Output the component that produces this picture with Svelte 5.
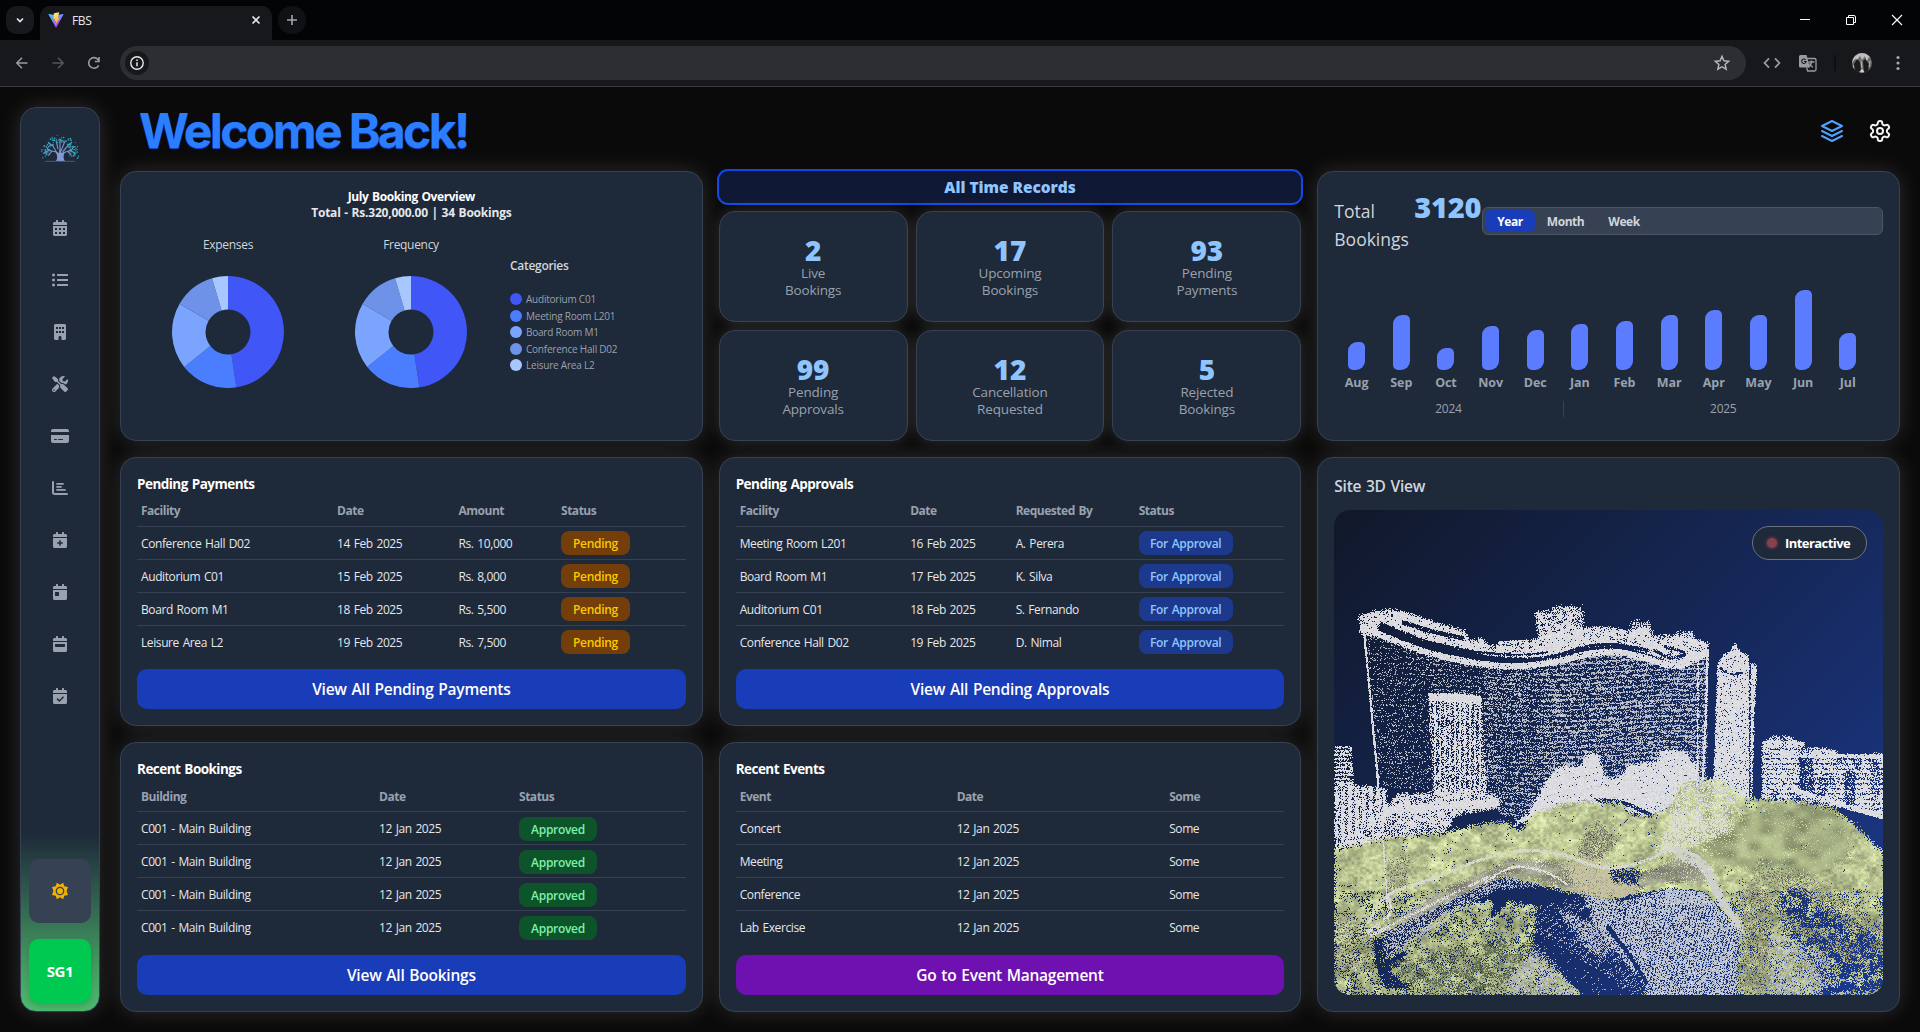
<script>
  import { onMount } from 'svelte';

  const calendarTop = 'M400 64h-48V16c0-8.8-7.2-16-16-16h-32c-8.8 0-16 7.2-16 16v48H160V16c0-8.8-7.2-16-16-16h-32c-8.8 0-16 7.2-16 16v48H48C21.5 64 0 85.5 0 112v48h448v-48c0-26.5-21.5-48-48-48z';
  const calendarBody = 'M0 464c0 26.5 21.5 48 48 48h352c26.5 0 48-21.5 48-48V192H0z';
  const calendar = (holes) => ({ w: 448, d: calendarTop + calendarBody + holes });

  const nav = [
    calendar('M64 256h64v64H64zM192 256h64v64h-64zM320 256h64v64h-64zM64 384h64v64H64zM192 384h64v64h-64zM320 384h64v64h-64z'),
    { w: 512, d: 'M48 48a48 48 0 1 0 .1 0zM48 208a48 48 0 1 0 .1 0zM48 368a48 48 0 1 0 .1 0zM176 64h320a16 16 0 0 1 16 16v32a16 16 0 0 1-16 16H176a16 16 0 0 1-16-16V80a16 16 0 0 1 16-16zM176 224h320a16 16 0 0 1 16 16v32a16 16 0 0 1-16 16H176a16 16 0 0 1-16-16v-32a16 16 0 0 1 16-16zM176 384h320a16 16 0 0 1 16 16v32a16 16 0 0 1-16 16H176a16 16 0 0 1-16-16v-32a16 16 0 0 1 16-16z' },
    { w: 384, d: 'M48 0C21.5 0 0 21.5 0 48v416c0 26.5 21.5 48 48 48h96v-80c0-26.5 21.500-48 48-48s48 21.500 48 48v80h96c26.500 0 48-21.500 48-48V48c0-26.500-21.500-48-48-48zM64 96h64v64H64zM160 96h64v64h-64zM256 96h64v64h-64zM64 224h64v64H64zM160 224h64v64h-64zM256 224h64v64h-64z' },
    { w: 512, d: 'M501.1 395.700L384 278.600c-23.100-23.100-57.600-27.600-85.400-13.900L192 158.100V96L64 0 0 64l96 128h62.100l106.600 106.600c-13.600 27.800-9.200 62.300 13.900 85.400l117.100 117.100c14.600 14.600 38.200 14.600 52.700 0l52.700-52.700c14.500-14.600 14.500-38.200 0-52.700zM331.700 225c28.300 0 54.900 11 74.900 31l19.400 19.400c15.800-6.900 30.800-16.500 43.800-29.500 37.100-37.100 49.700-89.300 37.900-136.700-2.200-9-13.500-12.100-20.100-5.500l-74.400 74.400-67.900-11.300L334 98.900l74.400-74.400c6.600-6.600 3.400-17.900-5.700-20.200-47.400-11.700-99.600.9-136.600 37.900-28.500 28.500-41.900 66.100-41.200 103.600l82.100 82.100c8.100-1.900 16.500-2.900 24.700-2.900zm-103.900 82l-56.700-56.700L18.700 402.800c-25 25-25 65.500 0 90.500s65.500 25 90.500 0l123.600-123.600c-7.600-19.900-9.900-41.600-5-62.700zM64 472c-13.200 0-24-10.800-24-24 0-13.300 10.700-24 24-24s24 10.700 24 24c0 13.200-10.700 24-24 24z' },
    { w: 576, d: 'M64 32C28.700 32 0 60.700 0 96v32h576V96c0-35.300-28.700-64-64-64zM576 224H0v192c0 35.300 28.700 64 64 64h448c35.300 0 64-28.700 64-64zM112 352h64a16 16 0 0 1 0 32h-64a16 16 0 0 1 0-32zM240 352h128a16 16 0 0 1 0 32H240a16 16 0 0 1 0-32z' },
    { w: 512, d: 'M32 32c17.700 0 32 14.300 32 32v336c0 8.800 7.200 16 16 16h400a32 32 0 0 1 0 64H80c-44.200 0-80-35.800-80-80V64c0-17.700 14.300-32 32-32zM160 96h192a28 28 0 0 1 0 56H160a28 28 0 0 1 0-56zM160 192h128a28 28 0 0 1 0 56H160a28 28 0 0 1 0-56zM160 288h256a28 28 0 0 1 0 56H160a28 28 0 0 1 0-56z' },
    calendar('M200 264h48v64h64v48h-64v64h-48v-64h-64v-48h64z'),
    calendar('M80 256h96c8.800 0 16 7.200 16 16v96c0 8.800-7.200 16-16 16H80c-8.800 0-16-7.200-16-16v-96c0-8.800 7.200-16 16-16z'),
    calendar('M80 256h288c8.800 0 16 7.200 16 16v64c0 8.800-7.200 16-16 16H80c-8.800 0-16-7.200-16-16v-64c0-8.800 7.200-16 16-16z'),
    calendar('M320 264l34 34-150 150-92-92 34-34 58 58z')
  ];

  // Donut segments as cumulative shares of the circle.
  const shares = [
    [0, 0.476, '#4056f7'],
    [0.476, 0.643, '#4b7dff'],
    [0.643, 0.834, '#7ba4ff'],
    [0.834, 0.954, '#6d92e8'],
    [0.954, 1, '#a8c7ff']
  ];
  const polar = (t, r) => `${(Math.sin(t * 2 * Math.PI) * r).toFixed(2)} ${(-Math.cos(t * 2 * Math.PI) * r).toFixed(2)}`;
  const slice = (a, b) =>
    `M${polar(a, 56)}A56 56 0 ${b - a > 0.5 ? 1 : 0} 1 ${polar(b, 56)}L${polar(b, 22.5)}A22.5 22.5 0 ${b - a > 0.5 ? 1 : 0} 0 ${polar(a, 22.5)}Z`;
  const categories = ['Auditorium C01', 'Meeting Room L201', 'Board Room M1', 'Conference Hall D02', 'Leisure Area L2'];

  const records = [
    ['2', 'Live', 'Bookings'], ['17', 'Upcoming', 'Bookings'], ['93', 'Pending', 'Payments'],
    ['99', 'Pending', 'Approvals'], ['12', 'Cancellation', 'Requested'], ['5', 'Rejected', 'Bookings']
  ];

  const months = [
    ['Aug', 28], ['Sep', 55], ['Oct', 22], ['Nov', 44], ['Dec', 40.5], ['Jan', 46],
    ['Feb', 49.5], ['Mar', 55], ['Apr', 60.5], ['May', 55], ['Jun', 80], ['Jul', 37]
  ];

  const tables = [
    {
      title: 'Pending Payments', key: 'payments', button: 'View All Pending Payments', pill: 'pending',
      head: ['Facility', 'Date', 'Amount', 'Status'],
      rows: [
        ['Conference Hall D02', '14 Feb 2025', 'Rs. 10,000', 'Pending'],
        ['Auditorium C01', '15 Feb 2025', 'Rs. 8,000', 'Pending'],
        ['Board Room M1', '18 Feb 2025', 'Rs. 5,500', 'Pending'],
        ['Leisure Area L2', '19 Feb 2025', 'Rs. 7,500', 'Pending']
      ]
    },
    {
      title: 'Pending Approvals', key: 'approvals', button: 'View All Pending Approvals', pill: 'approval',
      head: ['Facility', 'Date', 'Requested By', 'Status'],
      rows: [
        ['Meeting Room L201', '16 Feb 2025', 'A. Perera', 'For Approval'],
        ['Board Room M1', '17 Feb 2025', 'K. Silva', 'For Approval'],
        ['Auditorium C01', '18 Feb 2025', 'S. Fernando', 'For Approval'],
        ['Conference Hall D02', '19 Feb 2025', 'D. Nimal', 'For Approval']
      ]
    },
    {
      title: 'Recent Bookings', key: 'bookings', button: 'View All Bookings', pill: 'approved',
      head: ['Building', 'Date', 'Status'],
      rows: Array.from({ length: 4 }, () => ['C001 - Main Building', '12 Jan 2025', 'Approved'])
    },
    {
      title: 'Recent Events', key: 'events', button: 'Go to Event Management', pill: '',
      head: ['Event', 'Date', 'Some'],
      rows: ['Concert', 'Meeting', 'Conference', 'Lab Exercise'].map((e) => [e, '12 Jan 2025', 'Some'])
    }
  ];

  // Leaves of the tree logo, scattered over its crown.
  const frac = (v) => v - Math.floor(v);
  const leaves = Array.from({ length: 95 }, (_, i) => {
    const a = Math.PI * (-0.1 + 1.2 * frac(i * 0.618034));
    const r = 0.55 + 0.45 * frac(Math.sin(i * 12.9898) * 43758.5453);
    return [20 + Math.cos(a) * 19 * r, 19 - Math.sin(a) * 18 * r, 0.55 + (i % 3) * 0.15];
  });

  let canvas;

  // Point cloud of the site: scattered samples over outlines of buildings and trees.
  function drawSite(cv) {
    const W = 549, H = 485;
    const ctx = cv.getContext('2d');
    const img = ctx.createImageData(W, H);
    const px = img.data;
    let seed = 7;
    const rnd = () => {
      seed = (seed + 0x6d2b79f5) | 0;
      let t = Math.imul(seed ^ (seed >>> 15), 1 | seed);
      t = (t + Math.imul(t ^ (t >>> 7), 61 | t)) ^ t;
      return ((t ^ (t >>> 14)) >>> 0) / 4294967296;
    };
    const hash = (x, y) => {
      let h = Math.imul(x, 374761393) + Math.imul(y, 668265263);
      h = Math.imul(h ^ (h >>> 13), 1274126177);
      return ((h ^ (h >>> 16)) >>> 0) / 4294967296;
    };
    const noise = (x, y) => {
      const ix = Math.floor(x), iy = Math.floor(y);
      let fx = x - ix, fy = y - iy;
      fx = fx * fx * (3 - 2 * fx);
      fy = fy * fy * (3 - 2 * fy);
      const a = hash(ix, iy), b = hash(ix + 1, iy), c = hash(ix, iy + 1), d = hash(ix + 1, iy + 1);
      return a + (b - a) * fx + (c - a) * fy + (a - b - c + d) * fx * fy;
    };
    const map = (pts) => {
      const out = [];
      for (let i = 0; i < pts.length; i += 2) out.push([(pts[i] - 62) / 2.57, (pts[i + 1] - 162) / 2.694]);
      return out;
    };
    const inside = (p, x, y) => {
      let c = false;
      for (let i = 0, j = p.length - 1; i < p.length; j = i++) {
        if (p[i][1] > y !== p[j][1] > y && x < ((p[j][0] - p[i][0]) * (y - p[i][1])) / (p[j][1] - p[i][1]) + p[i][0]) c = !c;
      }
      return c;
    };
    const put = (x, y, c) => {
      x |= 0; y |= 0;
      if (x < 0 || y < 0 || x >= W || y >= H) return;
      const o = (y * W + x) * 4;
      if (!c) { px[o + 3] = 0; return; }
      px[o] = c[0]; px[o + 1] = c[1]; px[o + 2] = c[2]; px[o + 3] = c[3] ?? 255;
    };
    const area = (pts, density, color, jitter = 2) => {
      const p = map(pts);
      const xs = p.map((v) => v[0]), ys = p.map((v) => v[1]);
      for (let y = Math.floor(Math.min(...ys)) - 2; y < Math.max(...ys) + 2; y++)
        for (let x = Math.floor(Math.min(...xs)) - 2; x < Math.max(...xs) + 2; x++) {
          if (!inside(p, x + (rnd() - 0.5) * jitter, y + (rnd() - 0.5) * jitter)) continue;
          const d = typeof density === 'function' ? density(x, y) : density;
          if (rnd() < d) put(x, y, typeof color === 'function' ? color(x, y) : color);
        }
    };
    // Catmull-Rom strand of samples with a soft edge.
    const strand = (pts, width, density, color) => {
      const p = map(pts);
      for (let i = 0; i < p.length - 1; i++) {
        const a = p[Math.max(0, i - 1)], b = p[i], c = p[i + 1], d = p[Math.min(p.length - 1, i + 2)];
        const len = Math.hypot(c[0] - b[0], c[1] - b[1]);
        const n = Math.round(len * width * density * 2.2);
        for (let k = 0; k < n; k++) {
          const t = rnd(), t2 = t * t, t3 = t2 * t;
          const q = [0, 1].map((m) => 0.5 * (2 * b[m] + (c[m] - a[m]) * t + (2 * a[m] - 5 * b[m] + 4 * c[m] - d[m]) * t2 + (3 * b[m] - a[m] - 3 * c[m] + d[m]) * t3));
          put(q[0] + (rnd() - 0.5) * width * 0.5, q[1] + (rnd() - 0.5) * width, typeof color === 'function' ? color(q[0], q[1]) : color);
        }
      }
    };
    const white = () => { const v = 212 + rnd() * 22; return [v, v, v + 3, 250]; };
    const grey = () => { const v = 165 + rnd() * 60; return [v, v + 3, v + 10, 235]; };
    const leaf = (x, y) => {
      const n = noise(x / 11, y / 8) * 0.5 + noise(x / 3, y / 2.5) * 0.5;
      const v = 0.72 + n * 0.56 + (rnd() - 0.5) * 0.12 - (y > 400 ? 0.08 : 0);
      return [186 * v, 196 * v, 146 * v];
    };
    const mossy = (x, y) => { const v = 0.78 + noise(x / 12, y / 8) * 0.35 + (rnd() - 0.5) * 0.05; return [166 * v, 177 * v, 132 * v]; };
    const soil = () => { const v = 95 + rnd() * 70; return [v, v, v * 0.88]; };

    // Main block facade with its floor rows.
    area([140,500,178,500,260,535,400,570,520,582,620,575,720,548,800,545,880,562,945,580,1022,545,1018,890,940,960,620,970,530,1000,450,960,450,930,175,905],
      (x, y) => {
        const row = (y + Math.sin(x / 45) * 3 + noise(x / 5, y / 3) * 2) % 5.2 < 2 ? 1.5 : 0.55;
        const base = x < 95 ? 0.16 : x < 150 ? 0.22 : x < 210 ? 0.36 : 0.46;
        return base * row * (0.45 + noise(x / 4, y / 1.6) * 1.15);
      }, grey);
    strand([140,498,158,700,176,905], 3, 1, white);
    strand([1022,545,1018,700,1010,890], 4, 0.7, white);
    strand([998,570,996,860], 3, 0.35, white);
    // Roof plant room, roof deck and parapet.
    area([578,438,640,420,695,418,702,440,700,492,650,500,588,510], (x, y) => 0.45 + noise(x / 5, y / 3) * 0.6, white, 4);
    area([125,445,165,432,210,428,260,440,330,465,400,488,408,512,440,506,460,525,540,522,600,500,640,488,700,478,740,475,830,485,870,472,880,500,960,498,1025,518,1022,556,945,580,800,520,700,530,610,562,480,555,300,515,180,465,170,500,128,495], (x, y) => 0.72 + noise(x / 4, y / 3) * 0.4, white, 4);
    area([825,460,870,462,880,505,820,500], 0.55, white, 5);
    area([935,490,985,488,990,510,935,510], 0.55, white, 5);
    strand([165,492,300,545,420,573,520,583,620,573,720,549,790,545,860,560,945,582,1022,545], 6, 1.3, white);
    strand([178,478,300,525,420,555,540,565,620,556,710,530,780,524,870,540], 2.5, 1.2, null);
    strand([185,470,300,515,420,543,540,552,610,545], 1.6, 1.2, null);
    strand([240,465,310,488,395,508], 4, 1.4, null);
    strand([485,520,560,516], 3, 0.9, white);
    strand([885,540,925,560,965,548,910,530], 3, 1, null);
    // Block in front of the facade.
    area([303,655,440,660,452,932,318,932], 1, null, 0);
    area([303,655,440,660,452,932,318,932], (x) => ((x + 0.5) % 5 < 2.2 ? 0.88 : 0.52), white);
    area([303,655,400,655,440,664,440,684,306,675], 0.97, white);
    // Slim tower with its dome.
    area([1045,600,1048,572,1060,552,1080,540,1092,518,1104,540,1125,552,1132,574,1148,575,1142,680,1135,940,1036,940], (x) => (x > 414 && x < 417 ? 0.35 : 0.92), white);
    strand([1055,588,1080,604,1110,600], 2, 0.9, null);
    // Distant blocks.
    area([1162,795,1185,772,1235,770,1262,798,1350,806,1360,822,1475,815,1475,990,1350,960,1160,940],
      (x, y) => (y % 5 < 2.2 ? 0.88 : 0.55) * (noise(x / 9, y / 30) > 0.38 ? 1.05 : 0.6), white, 3);
    area([1258,830,1290,830,1298,925,1255,915], 0.7, null);
    area([1370,868,1400,860,1400,945,1375,940], 0.6, null);
    strand([1165,790,1270,792], 4, 0.9, white);
    strand([1210,822,1475,826], 4, 0.9, white);
    strand([1240,915,1330,945,1475,988], 5, 1, white);
    area([62,798,105,798,112,905,62,905], (x, y) => (y % 4 < 1.5 ? 0.8 : 0.35), white);
    area([62,905,80,892,110,900,165,905,195,915,195,975,62,1075], (x) => (x % 7 < 4 ? 0.92 : 0.6), white, 4);
    area([195,960,230,925,290,925,400,912,490,935,490,960,370,985,355,1025,62,1075], (x, y) => 0.55 + noise(x / 6, y / 4) * 0.5, white, 4);
    strand([195,972,330,960,480,950], 7, 1.2, white);
    area([615,875,640,850,695,850,710,815,740,815,752,860,760,885,800,882,815,850,895,835,900,805,965,815,1000,860,1000,890,1000,950,880,990,820,975,790,950,730,960,600,990,520,1010,560,975], 0.96, white, 4);
    strand([735,945,800,950,880,985], 4, 0.8, null);

    // Tree cover.
    area([62,1075,200,1045,340,1030,460,1002,510,1000,535,1028,570,985,640,955,720,945,800,950,830,985,880,985,925,955,955,900,1020,885,1075,900,1110,935,1240,945,1340,965,1400,1010,1475,1085,1475,1470,62,1470],
      (x, y) => Math.min(1, 0.84 + noise(x / 7, y / 5) * 0.5 - (y > 380 ? 0.26 : 0)), leaf, 6);
    area([925,960,955,900,1020,885,1080,905,1100,960,1060,1010,940,1010], 0.4, white, 8);
    area([1005,1010,1090,1020,1100,990,1240,945,1340,965,1390,1010,1380,1100,1240,1160,1120,1130,1010,1110], 0.9, mossy, 8);
    area([700,1040,735,1000,790,1050,740,1110,690,1090], 0.6, soil, 6);
    area([200,1110,260,1090,250,1160,200,1200], 0.4, soil, 10);
    area([885,1090,935,960,960,1000,1090,990,1080,1030,1000,1060,940,1085], 0.7, () => [218, 221, 204], 6);
    // Road sweeping through the park.
    area([190,1285,330,1190,520,1100,650,1110,760,1145,880,1130,960,1085,1030,1150,1000,1165,880,1165,800,1215,700,1200,560,1150,440,1180,300,1255,150,1310],
      0.82, (x, y) => { const v = 105 + noise(x / 18, y / 6) * 65 + rnd() * 25; return [v, v, v * 0.9]; }, 5);
    area([640,1110,760,1100,860,1200,760,1220,690,1200], 0.8, () => [190 + rnd() * 15, 194, 160], 12);
    area([765,1125,850,1130,840,1170,780,1160], 0.7, null, 6);
    // Open ground and plaza.
    area([190,1300,440,1175,500,1150,620,1180,700,1200,760,1215,920,1180,1010,1190,1100,1290,1095,1470,700,1470,570,1340,580,1225,510,1215,480,1250,460,1210,350,1240,190,1372], 1, null, 4);
    area([190,1290,440,1175,500,1148,600,1175,490,1180,420,1215,190,1372], 0.5, grey, 5);
    area([705,1200,800,1215,920,1180,1010,1190,1100,1290,1095,1470,870,1470,850,1430,715,1255],
      (x, y) => ((x + y * 0.25) % 3.5 < 2 ? 0.84 : 0.56) + (y < 395 && x > 330 ? 0.15 : 0), () => { const v = 178 + rnd() * 50; return [v, v + 4, v + 12, 235]; });
    area([580,1230,700,1200,780,1330,870,1470,710,1470,570,1330], (x, y) => ((x * 0.8 + y) % 7 < 3 ? 0.3 : 0.06), grey);
    area([640,1240,700,1260,790,1330,750,1370,700,1330], 0.6, grey, 5);
    strand([765,1285,820,1360,865,1435], 5, 1.3, null);
    area([570,1310,600,1310,835,1468,700,1468], 0.8, null, 3);
    strand([700,1262,720,1240], 6, 1.2, null);
    strand([470,1250,490,1190], 6, 1.2, null);
    // Kerbs and guard rails.
    strand([150,1275,200,1200,330,1150,450,1100,560,1080,650,1092,760,1126,860,1108,940,1072,1000,1100], 3, 0.8, () => [214, 216, 208]);
    strand([940,1085,1010,1120,1050,1200,1105,1285], 12, 0.7, () => [205, 208, 205]);
    strand([450,1165,520,1125,600,1135,660,1170], 2, 1, white);
    strand([150,1300,205,1250,200,1200], 4, 0.6, white);
    strand([185,975,190,1080,198,1200,205,1290], 2, 0.5, white);
    strand([155,1310,330,1215,460,1150], 3, 0.4, white);
    // Shaded gaps.
    area([160,1310,188,1320,190,1375,240,1345,245,1375,200,1400,260,1450,190,1452,165,1380], 0.95, null, 4);
    area([62,1240,160,1300,160,1380,62,1420], 0.3, soil, 8);
    area([210,1380,560,1300,580,1340,480,1468,250,1468], (x, y) => (noise(x / 8, y / 5) > 0.55 ? 0.6 : 0.1), () => [96, 108, 84], 6);
    area([580,1335,700,1470,560,1470,500,1440], 0.45, grey, 6);
    area([1205,1175,1260,1180,1330,1230,1475,1320,1475,1470,1300,1470,1300,1400,1220,1290],
      (x, y) => (noise(x / 7, y / 5) > 0.5 ? 0.85 : 0.2), null, 8);
    area([1110,1180,1170,1180,1180,1470,1100,1470], 0.35, () => soil(), 10);
    area([1180,1300,1300,1340,1380,1470,1180,1470], 0.4, grey, 8);
    area([1150,1110,1260,1140,1400,1230,1475,1290,1475,1340,1360,1270,1230,1190,1140,1160], 0.35, soil, 14);
    area([1120,1160,1250,1260,1400,1330,1475,1400,1400,1370,1240,1300,1120,1200], 0.35, soil, 14);
    strand([1320,1460,1400,1445], 6, 1.3, null);
    ctx.putImageData(img, 0, 0);
  }

  onMount(() => drawSite(canvas));
</script>

{#snippet dataTable(t)}
  <section class="card table-card {t.key}">
    <h3>{t.title}</h3>
    <div class="row head">
      {#each t.head as h}<span>{h}</span>{/each}
    </div>
    {#each t.rows as r}
      <div class="row">
        {#each r as c, i}
          {#if t.pill && i === r.length - 1}
            <b class="pill {t.pill}">{c}</b>
          {:else}
            <span>{c}</span>
          {/if}
        {/each}
      </div>
    {/each}
    <button class="wide">{t.button}</button>
  </section>
{/snippet}

{#snippet donut(label)}
  <div class="donut">
    <span>{label}</span>
    <svg width="112" height="112" viewBox="-56 -56 112 112">
      {#each shares as [a, b, c]}<path d={slice(a, b)} fill={c} />{/each}
    </svg>
  </div>
{/snippet}

<div class="window">
  <header class="tabs">
    <div class="tab-search">
      <svg width="10" height="10" viewBox="0 0 10 10"><path d="M2 3.500l3 3 3-3" fill="none" stroke="#e6e6e8" stroke-width="1.700" /></svg>
    </div>
    <div class="tab">
      <svg width="16" height="16" viewBox="0 0 32 32">
        <defs>
          <linearGradient id="va" x1="0" y1="0" x2=".6" y2="1"><stop offset="0" stop-color="#41d1ff" /><stop offset="1" stop-color="#bd34fe" /></linearGradient>
          <linearGradient id="vb" x1=".4" y1="0" x2=".6" y2="1"><stop offset="0" stop-color="#ffea83" /><stop offset="1" stop-color="#ffa800" /></linearGradient>
        </defs>
        <path d="M31 5L16.800 30.500c-.3.600-1.100.600-1.400 0L1 5c-.4-.6.2-1.400 1-1.200l14 2.500 14-2.500c.8-.2 1.400.6 1 1.200z" fill="url(#va)" />
        <path d="M22.500.5l-10.700 2-.7 11.700 3.300-.7-1 5.200 3-.8-2 8.600L23.500 11l-4 .8L22.500.5z" fill="url(#vb)" />
      </svg>
      <span>FBS</span>
      <svg width="10" height="10" viewBox="0 0 10 10"><path d="M1.500 1.500l7 7M8.500 1.500l-7 7" stroke="#e6e6e8" stroke-width="1.700" /></svg>
    </div>
    <div class="new-tab">
      <svg width="12" height="12" viewBox="0 0 12 12"><path d="M6 1v10M1 6h10" stroke="#a4a4a8" stroke-width="1.600" /></svg>
    </div>
    <div class="controls">
      <svg width="12" height="12" viewBox="0 0 12 12"><path d="M1 5.500h10" stroke="#fff" /></svg>
      <svg width="12" height="12" viewBox="0 0 12 12"><path d="M1.500 3.500h7v7h-7zM3.500 3V1.500h5.500a1.500 1.500 0 0 1 1.500 1.500v5.500H9" fill="none" stroke="#fff" /></svg>
      <svg width="12" height="12" viewBox="0 0 12 12"><path d="M1 1l10 10M11 1L1 11" stroke="#fff" stroke-width="1.100" /></svg>
    </div>
  </header>

  <div class="toolbar">
    <div class="nav-buttons">
      <svg width="16" height="16" viewBox="0 0 16 16"><path d="M13.500 8H3M8 2.800L2.800 8 8 13.200" fill="none" stroke="#9b9b9f" stroke-width="1.500" /></svg>
      <svg width="16" height="16" viewBox="0 0 16 16"><path d="M2.500 8H13M8 2.800L13.200 8 8 13.200" fill="none" stroke="#55565a" stroke-width="1.500" /></svg>
      <svg width="16" height="16" viewBox="0 0 16 16"><path d="M12.700 10.300A5.300 5.300 0 1 1 12.200 4.700L13 6M13 2v4.500H8.800" fill="none" stroke="#9b9b9f" stroke-width="1.600" /></svg>
    </div>
    <div class="address">
      <div class="info">
        <svg width="16" height="16" viewBox="0 0 16 16"><circle cx="8" cy="8" r="6.200" fill="none" stroke="#e8e8ea" stroke-width="1.400" /><path d="M8 7.300v4M8 4.500v1.500" stroke="#e8e8ea" stroke-width="1.500" /></svg>
      </div>
      <svg width="18" height="18" viewBox="0 0 18 18"><path d="M9 2.300l1.900 4.500 4.800.4-3.600 3.200 1.100 4.800L9 12.700l-4.200 2.500 1.100-4.800-3.600-3.200 4.800-.4z" fill="none" stroke="#b9b9bd" stroke-width="1.400" /></svg>
    </div>
    <svg class="code" width="18" height="12" viewBox="0 0 18 12"><path d="M6 1.300L1.600 6 6 10.700M12 1.300L16.400 6 12 10.700" fill="none" stroke="#9b9b9f" stroke-width="1.800" /></svg>
    <svg class="translate" width="18" height="18" viewBox="0 0 18 18">
      <path d="M1.500 1h6l3.500 12.500H1.500A1.500 1.500 0 0 1 0 12V2.500A1.500 1.500 0 0 1 1.500 1z" fill="#9b9b9f" />
      <path d="M8 4.500h7.500a1.500 1.500 0 0 1 1.500 1.500v9.500a1.500 1.500 0 0 1-1.500 1.500H8.700l-1.200-3.500M9.500 8h6M12.500 6.500V8c0 2-1.500 4-3 5M10.500 9.500c.7 1.700 2 3 3.500 3.800" fill="none" stroke="#9b9b9f" stroke-width="1.300" />
      <path d="M6.600 5.800a2.200 2.200 0 1 0 .5 1.700H5" fill="none" stroke="#17181c" stroke-width="1.100" />
    </svg>
    <i class="sep"></i>
    <svg class="avatar" width="20" height="20" viewBox="0 0 20 20">
      <defs><clipPath id="av"><circle cx="10" cy="10" r="10" /></clipPath></defs>
      <g clip-path="url(#av)">
        <rect width="20" height="20" fill="#6a6a6a" />
        <path d="M0 0h20v6l-3-2-2 4-2-5-3 4-2-4-3 4-2-1-3 4z" fill="#bdbdbd" />
        <path d="M3 20l-1-9 3-5 3 3 1 9zM12 20l-1-12 2-2 4 5-1 9z" fill="#1b1b1b" />
        <path d="M4 5l2-2M9 8l1 7M13 2l2 4M1 12l1 4M18 8l-1 6M8 19l2-3 2 3z" stroke="#cfcfcf" fill="#ccc" stroke-width=".8" />
      </g>
    </svg>
    <svg class="dots" width="4" height="16" viewBox="0 0 4 16"><circle cx="2" cy="2.500" r="1.600" fill="#a6a6aa" /><circle cx="2" cy="8" r="1.600" fill="#a6a6aa" /><circle cx="2" cy="13.500" r="1.600" fill="#a6a6aa" /></svg>
  </div>

  <div class="app">
    <aside>
      <svg class="logo" width="40" height="28" viewBox="0 0 40 28">
        <path d="M18 26c1-3 .5-6-2-8L9 16.500l-6 3M16.500 18l-5-8M18 15l-2-9M20 18V5M21 17l4-10M22.500 18l7-8M23 19l7-2.500 6 3M9 17l-3-5M31 17l3-5M13 12L8 8.500M28 12l4-4M12 17l-3 4M28 17.500l3 3.500" fill="none" stroke="#7490c8" stroke-width="1.200" />
        <path d="M16 27c1.800-2.500 1.500-6-.5-9.500l3.500 1.500 1-5 1.500 5 4-1.500c-2.500 3.500-2.500 7-.5 9.500z" fill="#7f9ad6" />
        <path d="M5 27.300h30" stroke="#5b7090" stroke-width=".7" />
        {#each leaves as [x, y, r]}<circle cx={x} cy={y} {r} fill="#2ea6b6" />{/each}
      </svg>
      <nav>
        {#each nav as icon}
          <svg width={icon.w / 32} height="16" viewBox="0 0 {icon.w} 512"><path d={icon.d} fill="#99a1af" fill-rule="evenodd" /></svg>
        {/each}
      </nav>
      <div class="side-button theme">
        <svg width="18" height="18" viewBox="-9 -9 18 18">
          <path d="M0-6.300L3.200-8.200 4.300-4.700 8-4.100 6.600 0 8 4.100 4.300 4.700 3.200 8.200 0 6.300-3.200 8.200-4.300 4.700-8 4.100-6.600 0-8-4.100-4.300-4.700-3.200-8.200z" fill="#f0b100" />
          <circle r="3.700" fill="none" stroke="#364153" stroke-width="1.300" />
        </svg>
      </div>
      <div class="side-button profile">SG1</div>
    </aside>

    <main>
      <div class="heading">
        <h1>Welcome Back!</h1>
        <svg width="24" height="24" viewBox="0 0 24 24" fill="none" stroke="#50a2ff" stroke-width="2" stroke-linecap="round" stroke-linejoin="round"><path d="M12 2L2 7l10 5 10-5zM2 17l10 5 10-5M2 12l10 5 10-5" /></svg>
        <svg width="24" height="24" viewBox="0 0 24 24" fill="none" stroke="#f3f4f6" stroke-width="2" stroke-linecap="round" stroke-linejoin="round"><path d="M12.220 2h-.44a2 2 0 0 0-2 2v.18a2 2 0 0 1-1 1.730l-.43.25a2 2 0 0 1-2 0l-.15-.08a2 2 0 0 0-2.730.73l-.22.38a2 2 0 0 0 .73 2.730l.15.1a2 2 0 0 1 1 1.720v.51a2 2 0 0 1-1 1.740l-.15.09a2 2 0 0 0-.73 2.730l.22.38a2 2 0 0 0 2.730.73l.15-.08a2 2 0 0 1 2 0l.43.25a2 2 0 0 1 1 1.730V20a2 2 0 0 0 2 2h.44a2 2 0 0 0 2-2v-.18a2 2 0 0 1 1-1.730l.43-.25a2 2 0 0 1 2 0l.15.08a2 2 0 0 0 2.730-.73l.22-.39a2 2 0 0 0-.73-2.730l-.15-.08a2 2 0 0 1-1-1.740v-.5a2 2 0 0 1 1-1.740l.15-.09a2 2 0 0 0 .73-2.730l-.22-.38a2 2 0 0 0-2.730-.73l-.15.08a2 2 0 0 1-2 0l-.43-.25a2 2 0 0 1-1-1.730V4a2 2 0 0 0-2-2z" /><circle cx="12" cy="12" r="3" /></svg>
      </div>

      <div class="grid">
        <section class="card overview">
          <h4>July Booking Overview</h4>
          <h4 class="total">Total - Rs.320,000.00 | 34 Bookings</h4>
          <div class="donuts">
            {@render donut('Expenses')}
            {@render donut('Frequency')}
            <div class="legend">
              <h5>Categories</h5>
              {#each categories as c, i}
                <div class="legend-item">
                  <svg width="12" height="12" viewBox="0 0 12 12"><circle cx="6" cy="6" r="6" fill={shares[i][2]} /></svg>
                  <span>{c}</span>
                </div>
              {/each}
            </div>
          </div>
        </section>

        <section class="records">
          <div class="records-title">All Time Records</div>
          <div class="tiles">
            {#each records as [n, a, b]}
              <div class="card tile"><strong>{n}</strong><span>{a}<br />{b}</span></div>
            {/each}
          </div>
        </section>

        <section class="card chart">
          <div class="chart-head">
            <div class="chart-label">Total Bookings</div>
            <strong>3120</strong>
            <div class="switch"><span class="active">Year</span><span>Month</span><span>Week</span></div>
          </div>
          <div class="bars">
            {#each months as [m, h]}
              <div class="month"><div class="bar" style="height: {h}px"></div><span>{m}</span></div>
            {/each}
          </div>
          <div class="years"><span>2024</span><span>2025</span></div>
        </section>

        {@render dataTable(tables[0])}
        {@render dataTable(tables[1])}

        <section class="card site">
          <h2>Site 3D View</h2>
          <div class="view">
            <canvas bind:this={canvas} width="549" height="485"></canvas>
            <div class="badge"><i></i>Interactive</div>
          </div>
        </section>

        {@render dataTable(tables[2])}
        {@render dataTable(tables[3])}
      </div>
    </main>
  </div>
</div>

<style>
  :global(body) {
    margin: 0;
    background: #0a0a0a;
  }
  .window, .window * {
    box-sizing: border-box;
  }
  .window {
    width: 1920px;
    height: 1032px;
    display: flex;
    flex-direction: column;
    overflow: hidden;
    background: #0a0a0a;
    color: #fff;
    font-family: 'Open Sans', 'Noto Sans', sans-serif;
  }
  svg { display: block; flex: none; }
  h1, h2, h3, h4, h5 { margin: 0; }

  .tabs {
    height: 40px;
    flex: none;
    display: flex;
    align-items: flex-end;
    background: #030406;
    padding-left: 6px;
  }
  .tab-search {
    width: 28px;
    height: 28px;
    margin-bottom: 6px;
    border-radius: 10px;
    background: #17181c;
    display: grid;
    place-items: center;
  }
  .tab {
    margin-left: 6px;
    width: 232px;
    height: 34px;
    padding: 0 11px 6px 8px;
    border-radius: 10px 10px 0 0;
    background: #17181c;
    display: flex;
    align-items: center;
    font-size: 12px;
    letter-spacing: -0.4px;
    color: #e6e6e8;
  }
  .tab span { margin-left: 8px; flex: 1; }
  .new-tab {
    margin: 0 0 6px 6px;
    width: 28px;
    height: 28px;
    border-radius: 50%;
    background: #101114;
    display: grid;
    place-items: center;
  }
  .controls {
    margin-left: auto;
    height: 40px;
    padding-right: 17px;
    display: flex;
    align-items: center;
    gap: 34px;
  }
  .toolbar {
    height: 47px;
    flex: none;
    display: flex;
    align-items: center;
    background: #17181c;
    border-bottom: 1px solid #3c3b41;
    padding: 0 20px 0 14px;
  }
  .nav-buttons { display: flex; gap: 20px; width: 106px; }
  .address {
    width: 1626px;
    height: 34px;
    border-radius: 17px;
    background: #2d2e32;
    display: flex;
    align-items: center;
    justify-content: space-between;
    padding: 0 15px 0 5px;
  }
  .info {
    width: 24px;
    height: 24px;
    border-radius: 50%;
    background: #17181c;
    display: grid;
    place-items: center;
  }
  .code { margin-left: 17px; }
  .translate { margin-left: 18px; }
  .sep { width: 2px; height: 16px; margin-left: 17px; background: #0d0e11; }
  .avatar { margin-left: 16px; }
  .dots { margin-left: 24px; }

  .app { flex: 1; display: flex; padding: 20px; min-height: 0; }
  aside {
    width: 80px;
    height: 905px;
    border: 1px solid #364153;
    border-radius: 16px;
    background: linear-gradient(to bottom, #1e2939 0, #1e2939 725px, #326350 795px, #43995f 855px, #4dbd70 905px);
    box-shadow: 0 0 22px rgba(255, 255, 255, 0.14);
    padding: 0 8px 8px;
    display: flex;
    flex-direction: column;
    align-items: center;
  }
  .logo { margin-top: 26px; }
  nav {
    margin-top: 58px;
    display: flex;
    flex-direction: column;
    align-items: center;
    gap: 36px;
    flex: 1;
  }
  .side-button {
    width: 62px;
    height: 64px;
    border-radius: 10px;
    display: grid;
    place-items: center;
  }
  .theme { background: #364153; }
  .profile {
    margin-top: 16px;
    background: #00c951;
    font-weight: 700;
    font-size: 15px;
    letter-spacing: -0.4px;
    box-shadow: 0 4px 6px rgba(0, 0, 0, 0.12);
  }

  main { width: 1780px; margin-left: 20px; display: flex; flex-direction: column; }
  .heading {
    height: 48px;
    margin-bottom: 16px;
    padding: 0 8px 0 19px;
    display: flex;
    align-items: center;
    gap: 24px;
  }
  h1 {
    flex: 1;
    font: 700 48px/48px Inter, sans-serif;
    letter-spacing: -2.6px;
    color: #2b7fff;
    text-shadow: 0 1px 1px #1447e6;
  }
  .grid {
    display: grid;
    grid-template-columns: repeat(3, 582.670px);
    grid-template-rows: repeat(3, 269.670px);
    gap: 16px;
  }
  .card {
    border: 1px solid #364153;
    border-radius: 16px;
    background: #1e2939;
    box-shadow: 0 0 22px rgba(255, 255, 255, 0.14);
  }

  .overview { padding: 17px 16px; text-align: center; }
  h4 { font-size: 12px; line-height: 16px; font-weight: 700; letter-spacing: -0.4px; word-spacing: 0.8px; }
  .total { color: #e5e7eb; letter-spacing: -0.22px; }
  .donuts { display: flex; padding: 16px 0 0 35px; }
  .donut { width: 112px; margin-right: 71px; font-size: 12px; letter-spacing: -0.3px; line-height: 16px; color: #d1d5dc; }
  .donut span { display: block; margin-bottom: 23px; }
  .legend { padding-top: 21px; margin-left: -28px; text-align: left; }
  h5 { font-size: 12px; line-height: 16px; font-weight: 600; letter-spacing: -0.3px; color: #d1d5dc; margin-bottom: 17px; }
  .legend-item { display: flex; align-items: center; gap: 4px; height: 16.500px; font-size: 10px; letter-spacing: -0.220px; color: #99a1af; }

  .records { display: flex; flex-direction: column; gap: 8px; }
  .records-title {
    height: 32px;
    border-radius: 9px;
    background: #0e1733;
    box-shadow: 0 0 0 2px #1447e6;
    display: grid;
    place-items: center;
    font-weight: 800;
    font-size: 15.500px;
    letter-spacing: -0.050px;
    color: #8ec5ff;
  }
  .tiles { flex: 1; display: grid; grid-template-columns: repeat(3, 1fr); grid-template-rows: 1fr 1fr; gap: 8px; }
  .tile {
    display: flex;
    flex-direction: column;
    align-items: center;
    justify-content: center;
    text-align: center;
    box-shadow: 0 0 15px rgba(255, 255, 255, 0.150);
  }
  .tile strong { font-weight: 800; font-size: 28px; line-height: 28px; color: #8ec5ff; margin-top: 3px; }
  .tile span { font-size: 13.500px; line-height: 17px; letter-spacing: -0.150px; color: #99a1af; margin-top: 1px; }

  .chart { padding: 16px; display: flex; flex-direction: column; }
  .chart-head { display: flex; height: 68px; }
  .chart-label { width: 80px; padding-top: 9px; font-weight: 500; font-size: 17.500px; line-height: 28px; letter-spacing: 0; color: #d1d5dc; }
  .chart-head strong { width: 68px; line-height: 38px; font-weight: 800; font-size: 29px; letter-spacing: -0.300px; color: #8ec5ff; }
  .switch {
    flex: 1;
    height: 28px;
    margin-top: 19px;
    border: 1px solid #4a5565;
    border-radius: 6px;
    background: #364153;
    display: flex;
    padding: 2px;
  }
  .switch span { padding: 1px 12px 0; line-height: 21px; font-size: 12px; font-weight: 700; letter-spacing: -0.450px; color: #d1d5dc; border-radius: 6px; }
  .switch .active { background: #193cb8; color: #fff; }
  .bars { display: flex; height: 136px; align-items: flex-end; padding-right: 13px; }
  .month { flex: 1; display: flex; flex-direction: column; align-items: center; gap: 4px; }
  .bar { width: 17px; border-radius: 9px 5px 9px 5px; background: #5b7cff; }
  .month span { font-size: 12.500px; line-height: 18px; font-weight: 700; letter-spacing: -0.100px; color: #99a1af; }
  .years { display: flex; margin-top: 9px; font-size: 12px; letter-spacing: -0.300px; line-height: 16px; text-align: center; color: #99a1af; }
  .years span { flex: 5; }
  .years span + span { flex: 7; border-left: 1px solid #364153; }

  .table-card { padding: 16px; display: flex; flex-direction: column; }
  h3 { font-size: 13.500px; line-height: 20px; font-weight: 700; letter-spacing: -0.530px; word-spacing: 1px; }
  .row {
    display: grid;
    height: 33px;
    flex: none;
    align-items: center;
    padding: 1px 0 0 4px;
    border-bottom: 1px solid #364153;
    font-size: 12px;
    letter-spacing: -0.400px;
    word-spacing: 1px;
    white-space: nowrap;
    color: #e5e7eb;
  }
  .row:nth-last-child(2) { border-bottom-color: transparent; }
  .row.head { font-weight: 700; color: #99a1af; letter-spacing: -0.480px; padding-top: 2px; }
  .payments .row { grid-template-columns: 196px 121.500px 102.500px 1fr; }
  .approvals .row { grid-template-columns: 170.500px 105.500px 123px 1fr; }
  .bookings .row { grid-template-columns: 238px 140px 1fr; }
  .events .row { grid-template-columns: 217px 212.500px 1fr; }
  .pill { height: 24px; line-height: 25px; border-radius: 8px; text-align: center; font-weight: 600; letter-spacing: -0.300px; }
  .pending { width: 69px; background: #733e0a; color: #fcc800; }
  .approval { width: 94px; background: #1c398e; color: #8ec5ff; }
  .approved { width: 78px; background: #0d542b; color: #7bf1a8; }
  .wide {
    margin-top: auto;
    height: 40px;
    flex: none;
    border: 0;
    border-radius: 10px;
    background: #193cb8;
    color: #fff;
    font: 600 15.500px 'Open Sans', sans-serif;
    letter-spacing: -0.240px;
    word-spacing: 1px;
  }
  .events .wide { background: #6e11b0; }

  .site { grid-column: 3; grid-row: 2 / 4; padding: 16px; }
  h2 { height: 36px; line-height: 25px; font-size: 15.500px; font-weight: 600; letter-spacing: -0.250px; word-spacing: 1px; color: #d1d5dc; }
  .view {
    position: relative;
    height: 485px;
    border-radius: 16px;
    overflow: hidden;
    background: linear-gradient(135deg, #101828, #1c398e);
  }
  canvas { display: block; width: 549px; height: 485px; }
  .badge {
    position: absolute;
    top: 16px;
    right: 16px;
    width: 115px;
    height: 34px;
    padding-left: 14px;
    border: 1px solid #6a7282;
    border-radius: 17px;
    background: #1e2939;
    display: flex;
    align-items: center;
    gap: 8px;
    font-weight: 700;
    font-size: 13px;
    letter-spacing: -0.550px;
  }
  .badge i { width: 10px; height: 10px; border-radius: 50%; background: #87404f; box-shadow: 0 0 4px #87404f; }
</style>
